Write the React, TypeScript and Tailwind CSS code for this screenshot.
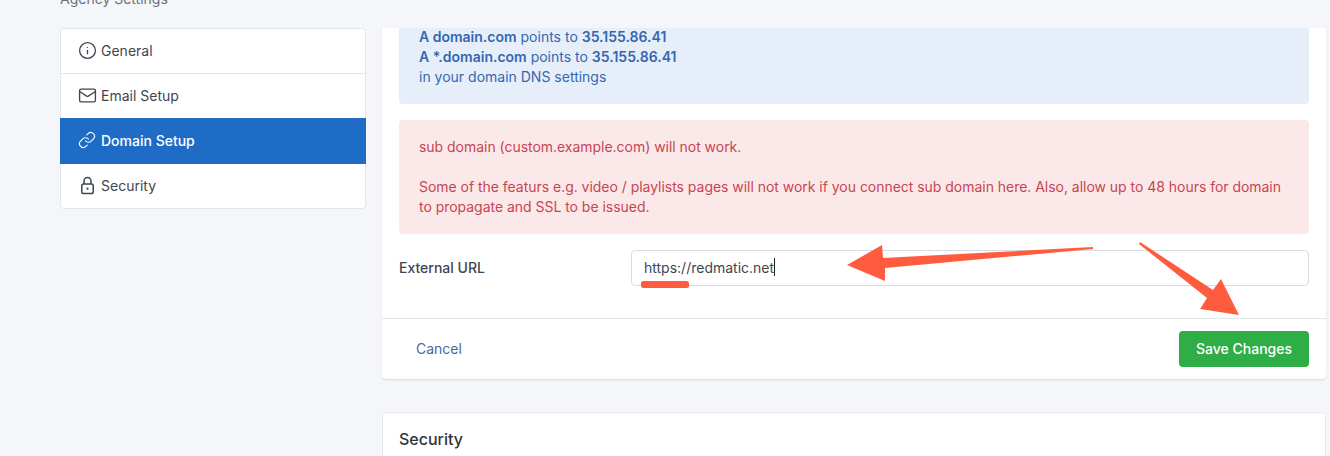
import { Info, Mail, Link } from "lucide-react";

function LockDot({ size = 19 }: { size?: number }) {
  return (
    <svg width={size} height={size} viewBox="0 0 19 19" fill="none" stroke="currentColor" strokeWidth="1.5">
      <rect x="3.75" y="8" width="11.5" height="9.5" rx="1.8" />
      <path d="M6 8V5a3.5 3.5 0 0 1 7 0v3" />
      <circle cx="9.5" cy="12.7" r="1.1" fill="currentColor" stroke="none" />
    </svg>
  );
}

const base = "flex items-center gap-[4px] pl-[17px]";

export default function App() {
  return (
    <div className="relative h-[456px] w-[1330px] overflow-hidden bg-[#f4f6f9] text-[14px] font-['Inter',sans-serif]">
      <div className="flex h-[28px] items-start pl-[60px]">
        <span className="-mt-[11px] block leading-[20px] text-[#6b7280]">Agency Settings</span>
      </div>
      <div className="flex items-start gap-4 pl-[60px] pr-1">
        <nav className="w-[306px] shrink-0 rounded-[4px] border border-[#e3e6ea] bg-white">
          <div className={`${base} h-[45px] border-b border-[#e3e6ea] pb-px text-[#3f4650]`}>
            <Info size={19} strokeWidth={1.7} />
            <span>General</span>
          </div>
          <div className={`${base} h-[44px] pb-px text-[#3f4650]`}>
            <Mail size={19} strokeWidth={1.7} />
            <span>Email Setup</span>
          </div>
          <div className="-mx-px flex h-[46px] items-center gap-[5px] bg-[#1f6cc6] pb-[2px] pl-[18px] font-medium text-white">
            <Link size={18} strokeWidth={1.5} />
            <span>Domain Setup</span>
          </div>
          <div className={`${base} h-[44px] pb-[2px] text-[#3f4650]`}>
            <LockDot />
            <span>Security</span>
          </div>
        </nav>
        <main className="w-[944px] shrink-0">
          <section className="overflow-hidden rounded-b-[4px] bg-white shadow-[0_1px_2px_rgba(0,0,0,0.12)]">
            <div className="px-[17px]">
              <div className="flex flex-col rounded-b-[4px] bg-[#e6eff9] px-5 pb-[17px] leading-[20px] text-[#3567b0]">
                <p className="-mt-px"><b className="font-semibold">A domain.com</b> points to <b className="font-semibold">35.155.86.41</b></p>
                <p><b className="font-semibold">A *.domain.com</b> points to <b className="font-semibold">35.155.86.41</b></p>
                <p>in your domain DNS settings</p>
              </div>
              <div className="mt-4 rounded-[4px] bg-[#fbe9e9] px-5 pb-[17px] pt-[17px] leading-[20px] tracking-[-0.03px] text-[#c94452]">
                <p>sub domain (custom.example.com) will not work.</p>
                <p className="mt-[20px]">
                  Some of the featurs e.g. video / playlists pages will not work if you connect sub domain here. Also, allow up to 48 hours for domain to propagate and SSL to be issued.
                </p>
              </div>
              <div className="mt-4 flex items-center pb-8">
                <label className="w-[232px] pb-[2px] font-medium text-[#3f4650]">External URL</label>
                <div className="flex h-[36px] flex-1 items-center rounded-[4px] border border-[#d8dbe0] bg-white pb-[2px] pl-3 text-[#3f4650]">
                  https://redmatic.net<span className="h-[18px] w-px bg-[#222]" />
                </div>
              </div>
            </div>
            <div className="flex items-center justify-between border-t border-[#e3e6ea] py-3 pl-[34px] pr-[17px]">
              <span className="pb-[2px] text-[#4a6a9c]">Cancel</span>
              <button className="h-[36px] w-[130px] rounded-[4px] bg-[#2fae47] pb-[2px] font-medium text-white">Save Changes</button>
            </div>
          </section>
          <section className="mt-[33px] h-[60px] rounded-[4px] border border-[#e6e8ec] bg-white px-[16px] pt-4 text-[16px] font-medium leading-[20px] text-[#2f343b]">
            Security
          </section>
        </main>
      </div>
      <svg className="pointer-events-none absolute inset-0" width="1330" height="456" viewBox="0 0 1330 456">
        <rect x="641" y="281" width="48" height="7" rx="2.5" fill="#ff5c3f" />
        <path d="M847 265L882 245L883 258L1093 247L1093 249L885 268L885 281Z" fill="#ff5c3f" />
        <path d="M1140 242L1213 290L1221 279L1239 315L1200 309L1207 298L1139 244Z" fill="#ff5c3f" />
      </svg>
    </div>
  );
}
